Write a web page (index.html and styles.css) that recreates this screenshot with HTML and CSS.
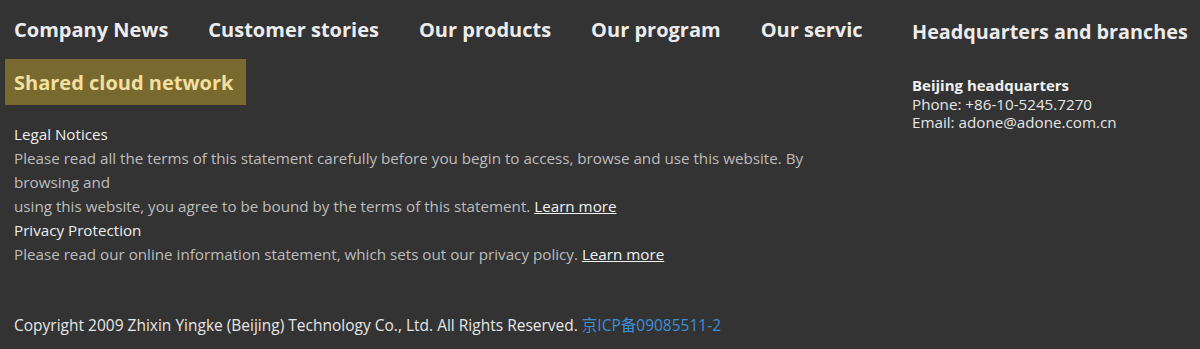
FILE: index.html
```html
<!DOCTYPE html>
<html lang="en">
<head>
<meta charset="utf-8">
<title>Footer</title>
<link rel="stylesheet" href="styles.css">
</head>
<body>
<footer class="footer">
  <div class="footer-main">
    <div class="left">
      <nav class="nav">
        <a class="nav-item" href="#">Company News</a>
        <a class="nav-item" href="#">Customer stories</a>
        <a class="nav-item" href="#">Our products</a>
        <a class="nav-item" href="#">Our program</a>
        <a class="nav-item" href="#">Our services</a>
      </nav>
      <div class="tag-row">
        <span class="tag">Shared cloud network</span>
      </div>
      <div class="legal">
        <div class="legal-title">Legal Notices</div>
        <p class="legal-text">Please read all the terms of this statement carefully before you begin to access, browse and use this website. By browsing and<br>using this website, you agree to be bound by the terms of this statement. <a class="more" href="#">Learn more</a></p>
        <div class="legal-title">Privacy Protection</div>
        <p class="legal-text">Please read our online information statement, which sets out our privacy policy. <a class="more" href="#">Learn more</a></p>
      </div>
    </div>
    <div class="right">
      <h3 class="hq-title">Headquarters and branches</h3>
      <div class="hq">
        <div class="hq-name">Beijing headquarters</div>
        <div class="hq-line">Phone: +86-10-5245.7270</div>
        <div class="hq-line">Email: adone@adone.com.cn</div>
      </div>
    </div>
  </div>
  <div class="copyright">Copyright 2009 Zhixin Yingke (Beijing) Technology Co., Ltd. All Rights Reserved. <a class="icp" href="#">京ICP备09085511-2</a></div>
</footer>
</body>
</html>
```

FILE: styles.css
```css
html, body {
  margin: 0;
  padding: 0;
  background: #333333;
}
body {
  font-family: "Open Sans", "Noto Sans", "Noto Sans CJK SC", sans-serif;
  color: #e6e6e6;
}
.footer {
  width: 1200px;
  height: 349px;
  overflow: hidden;
}
.footer-main {
  display: flex;
}
.left {
  width: 858px;
  padding-left: 5px;
  overflow: hidden;
}
.nav {
  display: flex;
  gap: 40px;
  padding-left: 9px;
  height: 59px;
  align-items: center;
  white-space: nowrap;
}
.nav-item {
  color: #ececec;
  text-decoration: none;
  font-weight: 700;
  font-size: 20px;
  flex: none;
}
.tag-row {
  display: flex;
}
.tag {
  display: flex;
  align-items: center;
  height: 46px;
  padding: 0 13px 0 9px;
  background: #786a2e;
  color: #f3dfa0;
  font-weight: 700;
  font-size: 20px;
}
.legal {
  padding: 17px 0 0 9px;
  max-width: 830px;
  font-size: 15.2px;
  line-height: 24px;
}
.legal-title {
  color: #ececec;
}
.legal-text {
  margin: 0;
  color: #bdbdbd;
}
.more {
  color: #f2f2f2;
  text-decoration: underline;
}
.right {
  padding-left: 49px;
  flex: 1;
}
.hq-title {
  margin: 0;
  height: 62px;
  display: flex;
  align-items: center;
  font-size: 19.8px;
  font-weight: 700;
  color: #ececec;
}
.hq {
  padding-top: 14px;
  font-size: 15px;
  line-height: 18.5px;
}
.hq-name {
  font-weight: 700;
  color: #f0f0f0;
}
.hq-line {
  color: #e6e6e6;
  font-size: 15.2px;
}
.copyright {
  padding: 47px 0 0 14px;
  font-size: 15.5px;
  line-height: 24px;
  color: #e6e6e6;
}
.icp {
  color: #3d8fd6;
  text-decoration: none;
}
```
